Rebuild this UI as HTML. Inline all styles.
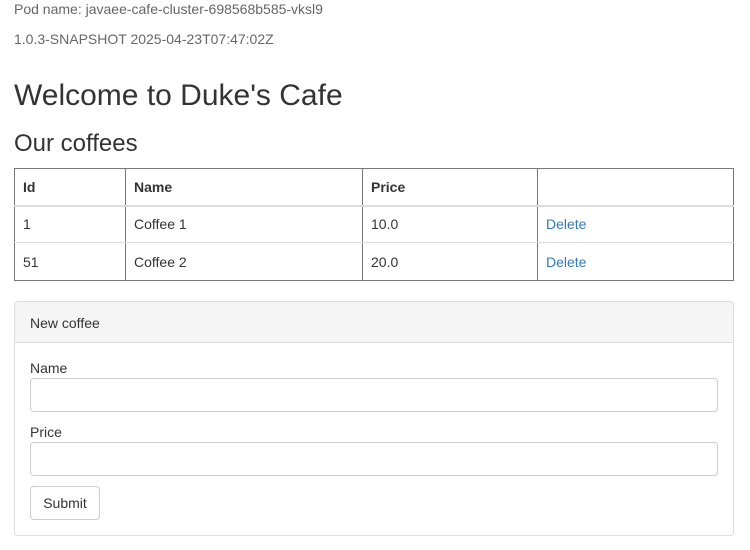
<!DOCTYPE html>
<html><head><style>
*{box-sizing:border-box;margin:0;padding:0}
body{width:750px;height:550px;background:#fff;font-family:"Liberation Sans",Arial,sans-serif;font-size:14px;color:#333;position:relative;overflow:hidden}
.a{position:absolute;white-space:nowrap}
.g{color:#666;font-size:14px}
table{position:absolute;left:14px;top:168px;width:720px;border-collapse:collapse;font-size:14px;border:1px solid #777}
td,th{border-left:1px solid #777;border-right:1px solid #777;border-top:1px solid #ddd;border-bottom:1px solid #ddd;padding:0 8px;text-align:left;height:37px}
th{height:37px;border-top:1px solid #777;border-bottom:2px solid #ddd;font-weight:bold}
tr:last-child td{border-bottom:1px solid #777;height:38px}
a{color:#337ab7;text-decoration:none}
.panel{position:absolute;left:14px;top:301px;width:720px;height:235px;border:1px solid #ddd;border-radius:4px}
.ph{height:41px;background:#f5f5f5;border-bottom:1px solid #ddd;padding:13px 15px 0;border-radius:3px 3px 0 0}
.in{position:absolute;left:15px;width:688px;height:34px;border:1px solid #ccc;border-radius:4px}
.btn{position:absolute;left:15px;top:184px;width:70px;height:34px;border:1px solid #ccc;border-radius:4px;text-align:center;line-height:32px}
</style></head><body>
<div class="a g" style="left:14px;top:1px">Pod name: javaee-cafe-cluster-698568b585-vksl9</div>
<div class="a g" style="left:14px;top:31px">1.0.3-SNAPSHOT 2025-04-23T07:47:02Z</div>
<div class="a" style="left:14px;top:79px;font-size:30px">Welcome to Duke's Cafe</div>
<div class="a" style="left:14px;top:130px;font-size:24px">Our coffees</div>
<table>
<tr><th style="width:111px">Id</th><th style="width:237px">Name</th><th style="width:175px">Price</th><th></th></tr>
<tr><td>1</td><td>Coffee 1</td><td>10.0</td><td><a>Delete</a></td></tr>
<tr><td>51</td><td>Coffee 2</td><td>20.0</td><td><a>Delete</a></td></tr>
</table>
<div class="panel">
<div class="ph">New coffee</div>
<div class="a" style="left:15px;top:58px">Name</div>
<div class="in" style="top:76px"></div>
<div class="a" style="left:15px;top:122px">Price</div>
<div class="in" style="top:140px"></div>
<div class="btn">Submit</div>
</div>
</body></html>
